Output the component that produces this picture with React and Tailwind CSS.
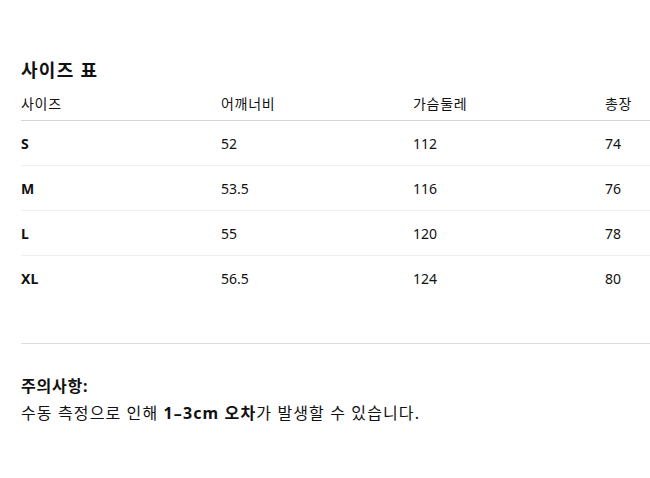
export default function App() {
  const rows = [
    ["S", "52", "112", "74"],
    ["M", "53.5", "116", "76"],
    ["L", "55", "120", "78"],
    ["XL", "56.5", "124", "80"],
  ];
  const font = { fontFamily: '"Noto Sans", "Noto Sans CJK KR", sans-serif' };
  return (
    <div className="w-[650px] h-[478px] bg-white text-[#111] pl-[21px] pt-[56px]" style={font}>
      <h2 className="text-[18px] font-bold leading-[28px] tracking-[0.07em]">사이즈 표</h2>
      <div className="grid grid-cols-[200px_192px_192px_1fr] text-[14px] leading-[20px] pt-[10px] pb-[6px] border-b border-[#d6d6d6] tracking-[0.05em]">
        <div>사이즈</div>
        <div>어깨너비</div>
        <div>가슴둘레</div>
        <div>총장</div>
      </div>
      {rows.map((r, i) => (
        <div
          key={r[0]}
          className={
            "grid grid-cols-[200px_192px_192px_1fr] items-center text-[14px] h-[45px] " +
            (i < rows.length - 1 ? "border-b border-[#efefef]" : "")
          }
        >
          <div className="font-bold">{r[0]}</div>
          <div>{r[1]}</div>
          <div>{r[2]}</div>
          <div>{r[3]}</div>
        </div>
      ))}
      <div className="mt-[42px] border-t border-[#dcdcdc] pt-[29px]">
        <div className="text-[16px] font-bold leading-[27px] tracking-[0.05em]">주의사항:</div>
        <div className="text-[16px] leading-[27px] tracking-[0.07em]">
          수동 측정으로 인해 <span className="font-bold">1–3cm 오차</span>가 발생할 수 있습니다.
        </div>
      </div>
    </div>
  );
}
